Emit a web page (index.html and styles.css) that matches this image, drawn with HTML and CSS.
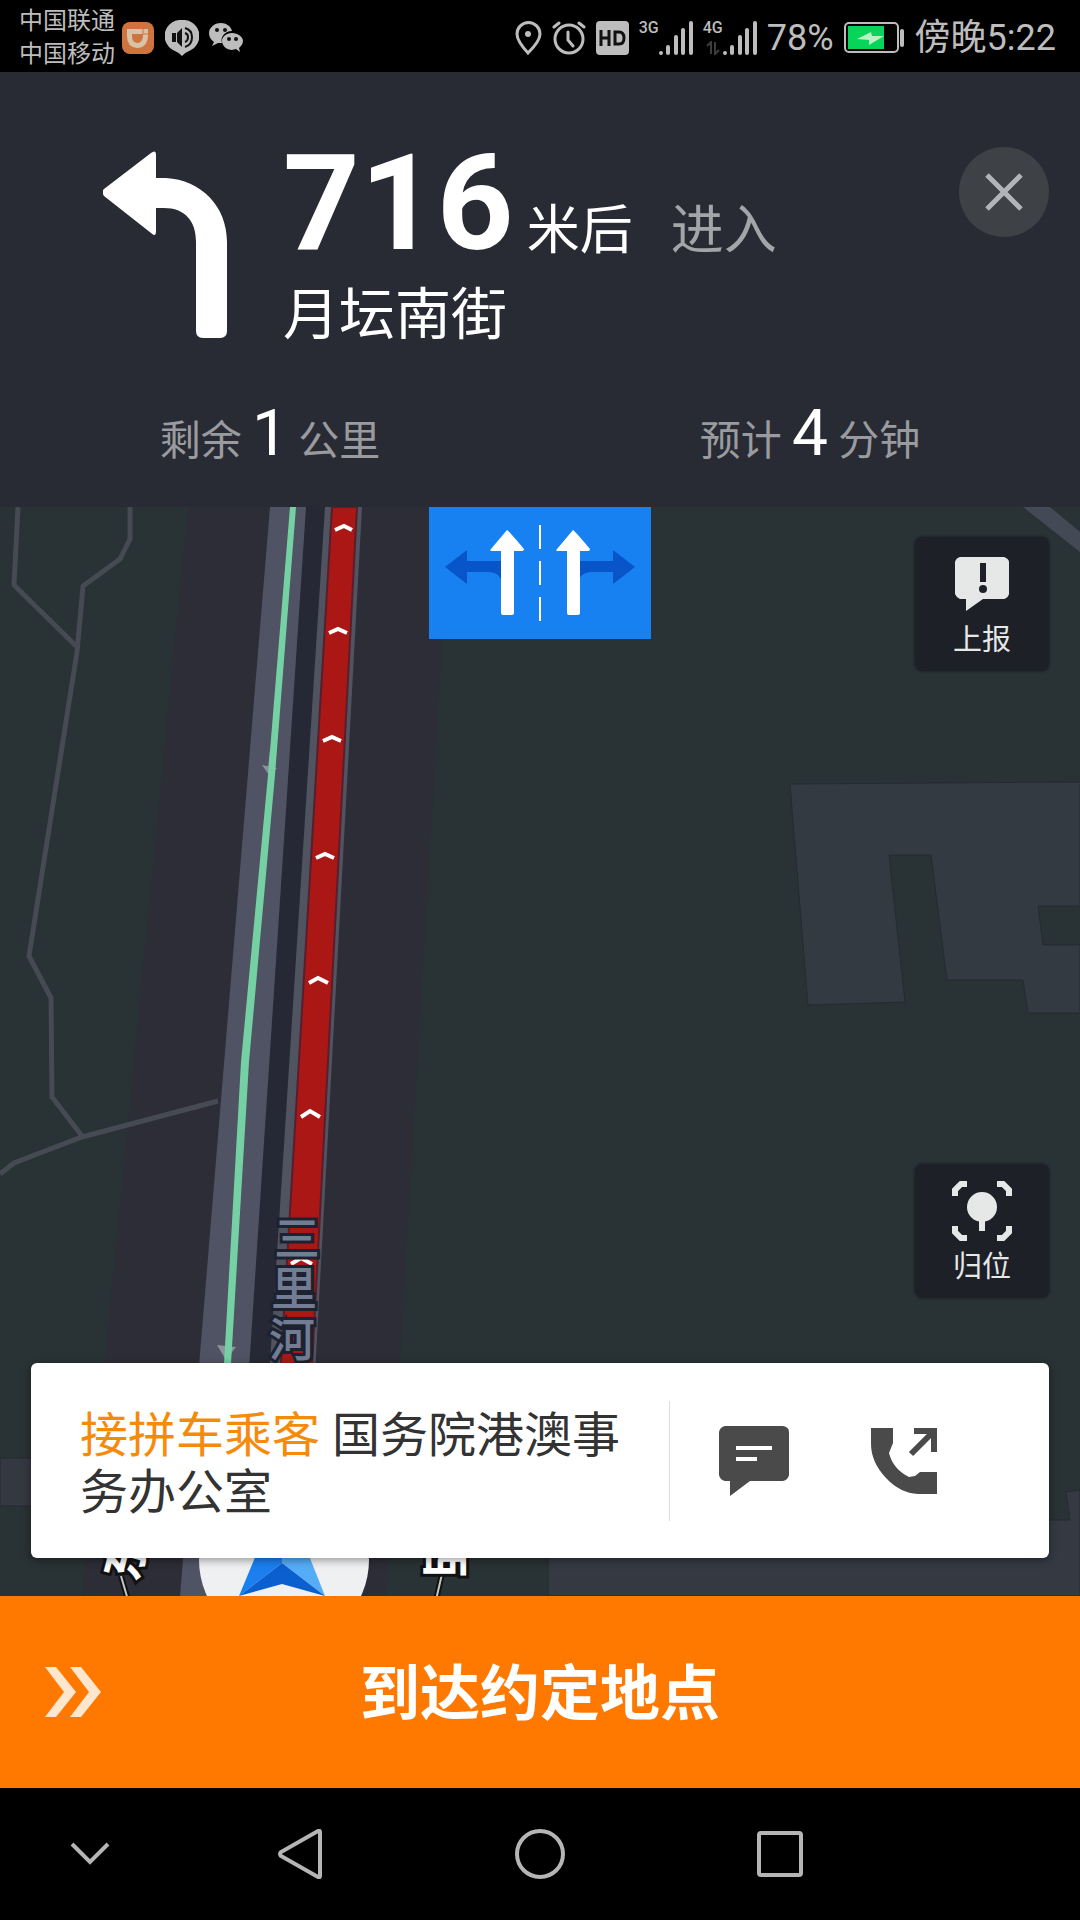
FILE: index.html
```html
<!DOCTYPE html>
<html lang="zh-CN">
<head>
<meta charset="utf-8">
<meta name="viewport" content="width=device-width, initial-scale=1">
<title>导航</title>
<link rel="stylesheet" href="styles.css">
</head>
<body>
<div class="status-bar">
  <div class="carriers"><span>中国联通</span><span>中国移动</span></div>
  <div class="status-group">
    <svg width="34" height="34" viewBox="0 0 34 34">
      <rect x="1" y="1" width="32" height="32" rx="8" fill="#cf7440"/>
      <path d="M6 8H27V15Q26 27 16 27Q6 26 6 15Z" fill="#d8c3a6"/>
      <path d="M11 13H22V16Q21 22 16 22Q11 21 11 16Z" fill="#cf7440"/>
      <path d="M22 8V13H27" stroke="#cf7440" fill="none"/>
    </svg>
    <svg width="34" height="36" viewBox="0 0 34 36">
      <path d="M17 0A16 16 0 0 1 26 30Q21 32 17 36Q13 32 8 30A16 16 0 0 1 17 0Z" fill="#bdbdbd"/>
      <path d="M7 13H11V22H7ZM12 13L17 8V27L12 22Z" fill="#111"/>
      <path d="M20 8Q27 10 27 17Q27 25 20 27M20 13Q23 14 23 17Q23 21 20 22" fill="none" stroke="#111" stroke-width="2"/>
    </svg>
    <svg width="34" height="30" viewBox="0 0 34 30">
      <path d="M12 0C5 0 0 5 0 10C0 14 2 17 5 19L3 23L9 20H13C11 14 16 8 23 8C22 3 17 0 12 0Z" fill="#bdbdbd"/>
      <path d="M23 10C17 10 13 14 13 18C13 23 18 27 23 27L27 26L31 29L30 25C32 23 34 21 34 18C34 14 29 10 23 10Z" fill="#bdbdbd"/>
      <g fill="#111"><circle cx="8" cy="7" r="2"/><circle cx="16" cy="7" r="2"/><circle cx="20" cy="16" r="2"/><circle cx="27" cy="16" r="2"/></g>
    </svg>
  </div>
  <div class="status-group status-right">
    <svg width="27" height="34" viewBox="0 0 27 34" fill="none" stroke="#bdbdbd" stroke-width="3">
      <path d="M13 32Q2 20 2 13A11 11 0 0 1 25 13Q25 20 13 32Z"/><circle cx="13" cy="13" r="3" fill="#bdbdbd" stroke="none"/>
    </svg>
    <svg width="34" height="34" viewBox="0 0 34 34" fill="none" stroke="#bdbdbd" stroke-width="3" stroke-linecap="round">
      <circle cx="17" cy="18" r="14"/><path d="M16 11V19L21 25M2 6L7 2M32 6L27 2"/>
    </svg>
    <svg width="33" height="34" viewBox="0 0 33 34">
      <rect width="33" height="34" rx="4" fill="#bdbdbd"/>
      <path d="M5 9V25M13 9V25M5 17H13M19 11V23H23Q28 23 28 17Q28 11 23 11Z" fill="none" stroke="#111" stroke-width="3"/>
    </svg>
    <div class="signal"><span>3G</span>
      <svg width="34" height="36" viewBox="0 0 34 36" stroke="#bdbdbd" stroke-width="4" stroke-linecap="round"><path d="M2 33V33M9 27V33M17 17V33M24 10V33M32 3V33"/></svg>
    </div>
    <div class="signal">
      <div class="network"><span>4G</span>
        <svg width="14" height="14" viewBox="0 0 14 14" fill="none" stroke="#3c3c3c" stroke-width="2"><path d="M1 5L5 1V13M9 1V13L13 9"/></svg>
      </div>
      <svg width="34" height="36" viewBox="0 0 34 36" stroke="#bdbdbd" stroke-width="4" stroke-linecap="round"><path d="M2 33V33M9 27V33M17 17V33M24 10V33M32 3V33"/></svg>
    </div>
    <span>78%</span>
    <svg width="61" height="32" viewBox="0 0 61 32">
      <rect x="1" y="1" width="53" height="29" rx="4" fill="none" stroke="#bdbdbd" stroke-width="2"/>
      <rect x="4" y="4" width="36" height="23" fill="#06d55a"/>
      <rect x="56" y="7" width="4" height="18" rx="2" fill="#bdbdbd"/>
      <path d="M13 17L27 10L28 14H40L25 23V18Z" fill="#b8f3c8"/>
    </svg>
    <span>傍晚5:22</span>
  </div>
</div>

<header class="guide">
  <div class="guide-main">
    <svg class="turn" width="124" height="187" viewBox="0 0 124 187" fill="#fff">
      <path d="M1 38L48 2Q53 -2 53 4V27H63C98 29 124 55 124 91V180Q124 187 117 187H100Q93 187 93 180V91C93 70 82 57 61 57H53V80Q53 87 48 82L1 45Q-2 41 1 38Z"/>
    </svg>
    <div class="guide-text">
      <div class="distance"><strong>716</strong><span>米后</span><span class="enter">进入</span></div>
      <div class="road">月坛南街</div>
    </div>
    <button class="close" type="button" aria-label="关闭">
      <svg width="40" height="40" viewBox="0 0 40 40" stroke="#b2b5b8" stroke-width="5"><path d="M3 3L37 37M37 3L3 37"/></svg>
    </button>
  </div>
  <div class="summary">
    <div>剩余 <b>1</b> 公里</div>
    <div>预计 <b>4</b> 分钟</div>
  </div>
</header>

<main class="map">
  <svg class="map-canvas" viewBox="0 507 1080 1089" preserveAspectRatio="xMidYMin slice">
    <rect y="507" width="1080" height="1089" fill="#293234"/>
    <!-- road corridor -->
    <path d="M188 507H450L386 1596H82Z" fill="#2c2d36"/>
    <!-- buildings and side roads -->
    <g stroke="#252b32" stroke-width="1">
      <path d="M790 784L1080 782V906H1038L1043 945H1080V1013H1028L1023 980H947L931 855H889L905 1002L808 1005Z" fill="#343a42"/>
      <path d="M0 1458H100V1506H0Z" fill="#343841"/>
      <path d="M548 1520H1070L1066 1492L1080 1490V1596H548Z" fill="#343942"/>
    </g>
    <path d="M1023 507H1050L1080 532V552Z" fill="#434955"/>
    <!-- footpaths -->
    <g fill="none" stroke="#454a53" stroke-width="5">
      <path d="M18 507L14 585L76 646M130 507V539L120 559L83 586L77 652L29 956L51 998L52 1097L82 1136"/>
      <path d="M0 1174L14 1163L82 1137L218 1101"/>
    </g>
    <!-- main road -->
    <path d="M306 507H325L260 1596H232Z" fill="#262935"/>
    <path d="M270 507H306L234 1596H180Z" fill="#4f5363"/>
    <path d="M325 507H362L303 1596H255Z" fill="#505460"/>
    <path d="M332 507H357L300 1596H267Z" fill="#ab1715" stroke="#571f2d" stroke-width="2"/>
    <g fill="#8d929b"><path d="M262 765L277 768L269 775ZM270 750H274V768H268Z"/><path d="M217 1345L236 1347L226 1360Z"/></g>
    <path d="M290 507H296L275 775L249 1062L231 1364H224L241 1062L268 775Z" fill="#75d1a3"/>
    <g fill="none" stroke="#fff" stroke-width="4">
      <path d="M335 530L344 526L352 530M329 633L338 629L347 633M323 741L332 737L341 741M316 858L325 854L334 858M309 983L318 978L328 983M301 1117L310 1111L320 1117M291 1264L301 1258L312 1264"/>
    </g>
    <g class="street-name">
      <text x="297" y="1255">三</text><text x="294" y="1305">里</text><text x="292" y="1356">河</text>
    </g>
    <!-- compass and vehicle marker -->
    <path d="M121 1576L128 1600M442 1574L436 1600" stroke="#111" stroke-width="6"/>
    <path d="M121 1576L128 1600M442 1574L436 1600" stroke="#c5c5c5" stroke-width="2"/>
    <g class="compass">
      <text x="0" y="17" transform="translate(126 1556) rotate(-75)">东</text>
      <text x="0" y="17" transform="translate(445 1554) rotate(90)">西</text>
    </g>
    <circle cx="284" cy="1560" r="85" fill="#eef0f1"/>
    <path d="M283 1490L239 1596L282 1563Z" fill="#1b7ff0"/>
    <path d="M283 1490L325 1596L282 1563Z" fill="#55adf8"/>
    <path d="M282 1563L325 1596L282 1584L239 1596Z" fill="#0c5fcf"/>
  </svg>

  <svg class="lanes" width="222" height="132" viewBox="0 0 222 132">
    <rect width="222" height="132" fill="#1781f2"/>
    <g fill="#0755c9">
      <path d="M16 60L38 43V54H72V72Q68 65 60 65H38V77Z"/>
      <path d="M206 60L184 43V54H150V72Q154 65 162 65H184V77Z"/>
    </g>
    <g fill="#fff">
      <path d="M78 23Q79 23 95 42Q95 44 93 44H85V106Q85 108 83 108H74Q72 108 72 106V44H63Q60 44 62 42Z"/>
      <path d="M144 23Q145 23 161 42Q161 44 159 44H151V106Q151 108 149 108H140Q138 108 138 106V44H129Q126 44 128 42Z"/>
      <path d="M110 18H112V42H110ZM110 54H112V78H110ZM110 90H112V114H110Z"/>
    </g>
  </svg>

  <div class="tools">
    <button class="tool" type="button">
      <svg width="60" height="60" viewBox="0 0 60 60">
        <path d="M8 3H52Q57 5 57 8V40Q56 44 52 45H31L14 57V45H8Q4 43 3 40V8Q4 4 8 3Z" fill="#e6e7e7"/>
        <path d="M28 9H34V28H28Z" fill="#1d2028"/><circle cx="31" cy="35" r="4" fill="#1d2028"/>
      </svg>
      上报
    </button>
    <button class="tool" type="button">
      <svg width="60" height="60" viewBox="0 0 60 60" fill="none" stroke="#e6e7e7" stroke-width="6">
        <path d="M3 15V9L9 3H15M45 3H51L57 9V15M57 45V51L51 57H45M15 57H9L3 51V45M30 38V50"/>
        <circle cx="30" cy="26" r="15" fill="#e6e7e7" stroke="none"/>
      </svg>
      归位
    </button>
  </div>

  <section class="order">
    <p><em>接拼车乘客</em> 国务院港澳事务办公室</p>
    <div class="contact">
      <button type="button" aria-label="发消息">
        <svg width="70" height="70" viewBox="0 0 70 70">
          <path d="M6 0H64Q70 1 70 6V49Q69 54 64 55H31L11 70V55H6Q1 54 0 49V6Q1 1 6 0Z" fill="#4a4a4a"/>
          <path d="M17 22H53M17 33H38" stroke="#fff" stroke-width="4"/>
        </svg>
      </button>
      <button type="button" aria-label="打电话">
        <svg width="66" height="68" viewBox="0 0 66 68">
          <path d="M0 1H22V16L18 26Q22 42 38 50L44 49L49 45H66V67H47Q29 66 15 51Q0 35 0 17Z" fill="#4a4a4a"/>
          <path d="M40 27L62 5M43 4H63V25" fill="none" stroke="#4a4a4a" stroke-width="6"/>
        </svg>
      </button>
    </div>
  </section>
</main>

<button class="arrive" type="button">
  <svg width="56" height="50" viewBox="0 0 56 50" fill="#ffe7cf"><path d="M0 0H11L31 25L11 50H0L19 25ZM25 0H36L56 25L36 50H25L44 25Z"/></svg>
  <span>到达约定地点</span>
</button>

<nav class="system-nav">
  <button type="button" aria-label="收起"><svg width="40" height="50" viewBox="0 0 40 50"><path d="M2 15L20 33L38 15"/></svg></button>
  <button type="button" aria-label="返回"><svg width="44" height="50" viewBox="0 0 44 50"><path d="M42 3V47Q42 49 40 48L3 27Q1 25 3 23L40 2Q42 1 42 3Z"/></svg></button>
  <button type="button" aria-label="主页"><svg width="50" height="50" viewBox="0 0 50 50"><circle cx="25" cy="25" r="23"/></svg></button>
  <button type="button" aria-label="最近任务"><svg width="46" height="50" viewBox="0 0 46 50"><rect x="2" y="4" width="42" height="42" rx="2"/></svg></button>
</nav>
</body>
</html>
```

FILE: styles.css
```css
* {
  box-sizing: border-box;
}

body {
  margin: 0;
  min-height: 100vh;
  display: flex;
  flex-direction: column;
  background: #000;
  color: #fff;
  font-family: Roboto, "Noto Sans CJK SC", sans-serif;
}

button {
  margin: 0;
  padding: 0;
  border: 0;
  background: none;
  color: inherit;
  font: inherit;
  cursor: pointer;
}

svg {
  display: block;
  flex: none;
}

/* Status bar */
.status-bar {
  height: 72px;
  padding: 3px 24px 0 19px;
  display: flex;
  align-items: center;
  gap: 6px;
  color: #bdbdbd;
  font-size: 36px;
  line-height: 40px;
}

.carriers {
  display: flex;
  flex-direction: column;
  font-size: 24px;
  line-height: 33px;
}

.status-group {
  display: flex;
  align-items: center;
  gap: 10px;
}

.status-right {
  margin-left: auto;
}

.signal {
  display: flex;
  align-items: flex-start;
  font-size: 16px;
  font-weight: 500;
  line-height: 16px;
}

.network {
  display: flex;
  flex-direction: column;
  align-items: center;
  gap: 5px;
}

/* Turn guidance */
.guide {
  height: 435px;
  padding: 79px 31px 0 103px;
  background: #292b34;
}

.guide-main {
  height: 187px;
  display: flex;
  align-items: flex-start;
}

.guide-text {
  margin: 5px 0 0 56px;
}

.distance {
  display: flex;
  align-items: baseline;
  font-size: 53px;
  line-height: 96px;
}

.distance strong {
  margin-right: 13px;
  font-size: 134px;
  font-weight: 700;
}

.enter {
  margin-left: 38px;
  color: #a3a5a9;
}

.road {
  font-size: 56px;
  line-height: 72px;
}

.close {
  width: 90px;
  height: 90px;
  margin: -4px 0 0 auto;
  display: grid;
  place-items: center;
  border-radius: 50%;
  background: #3e4246;
}

.summary {
  margin: 60px -31px 0 -103px;
  display: grid;
  grid-template-columns: 1fr 1fr;
  text-align: center;
  color: #999b9f;
  font-size: 41px;
  line-height: 72px;
}

.summary b {
  color: #fff;
  font-size: 64px;
  font-weight: 400;
}

/* Map */
.map {
  position: relative;
  flex: 1;
  min-height: 800px;
  padding: 30px 31px 38px;
  display: flex;
  flex-direction: column;
  overflow: hidden;
}

.map-canvas {
  position: absolute;
  inset: 0;
  width: 100%;
  height: 100%;
}

.street-name {
  fill: #727c93;
  stroke: #1d2230;
  stroke-width: 6px;
  paint-order: stroke;
  font-size: 46px;
  font-weight: 500;
  text-anchor: middle;
}

.compass {
  fill: #fff;
  stroke: #111;
  stroke-width: 6px;
  paint-order: stroke;
  font-size: 48px;
  font-weight: 700;
  text-anchor: middle;
}

.lanes {
  position: absolute;
  top: 0;
  left: 50%;
  transform: translateX(-50%);
}

.tools {
  position: relative;
  flex: 1;
  display: flex;
  flex-direction: column;
  justify-content: space-between;
  align-items: flex-end;
  padding-bottom: 65px;
}

.tool {
  width: 134px;
  height: 134px;
  padding-top: 8px;
  display: flex;
  flex-direction: column;
  align-items: center;
  justify-content: center;
  gap: 4px;
  border-radius: 8px;
  background: #1e2028;
  box-shadow: 0 0 3px #14181b;
  color: #e6e7e7;
  font-size: 29px;
  line-height: 44px;
}

.order {
  position: relative;
  min-height: 195px;
  padding: 36px 0 36px 49px;
  display: flex;
  align-items: center;
  border-radius: 6px;
  background: #fff;
  box-shadow: 0 2px 8px rgba(0, 0, 0, 0.4);
  color: #333;
}

.order p {
  flex: 1;
  margin: 0;
  padding: 6px 48px 0 0;
  font-size: 48px;
  line-height: 57px;
}

.order em {
  color: #f58a0b;
  font-style: normal;
}

.contact {
  height: 120px;
  padding: 0 112px 0 49px;
  display: flex;
  align-items: center;
  gap: 82px;
  border-left: 1px solid #dedede;
}

/* Arrival action */
.arrive {
  height: 192px;
  padding: 0 45px;
  display: grid;
  grid-template-columns: 1fr auto 1fr;
  align-items: center;
  background: #ff7900;
  font-size: 60px;
  font-weight: 700;
  line-height: 80px;
}

.arrive span {
  padding-top: 6px;
}

/* System navigation */
.system-nav {
  height: 132px;
  display: grid;
  grid-template-columns: 3fr 4fr 4fr 4fr 3fr;
}

.system-nav button {
  display: grid;
  place-items: center;
}

.system-nav svg {
  fill: none;
  stroke: #b5b5b5;
  stroke-width: 4px;
}
```
